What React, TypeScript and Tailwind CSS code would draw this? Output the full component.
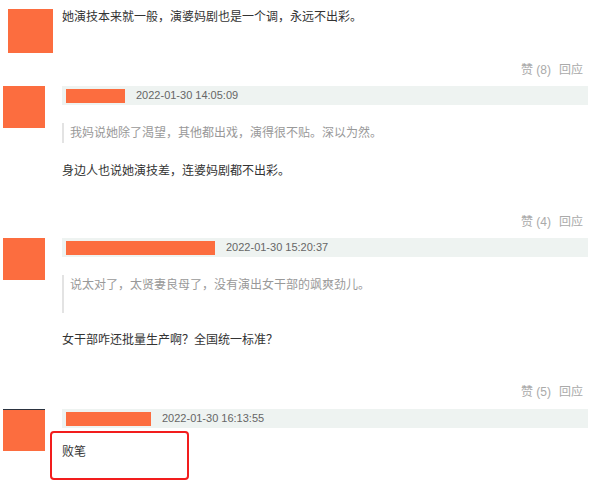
import React from "react";

const font = { fontFamily: '"Liberation Sans", "Noto Sans CJK SC", sans-serif' };

function Actions({ likes, className }: { likes: number; className: string }) {
  return (
    <div className={`flex h-[18px] items-center justify-end gap-2 pr-[5px] text-[12px] leading-[18px] text-[#aaaaaa] ${className}`}>
      <span>赞 ({likes})</span>
      <span>回应</span>
    </div>
  );
}

function Header({ nameWidth, time }: { nameWidth: string; time: string }) {
  return (
    <div className="flex h-[19px] items-center bg-[#eef3f1]">
      <div className={`ml-[4px] h-[14px] bg-[#fc6d3f] ${nameWidth}`} />
      <span className="ml-[11px] text-[11px] leading-[19px] text-[#666666]">{time}</span>
    </div>
  );
}

function Quote({ text, tall }: { text: string; tall?: boolean }) {
  return (
    <div
      className={`border-l-2 border-[#e3e3e3] pl-[6px] text-[12px] leading-[20px] text-[#999999] ${
        tall ? "h-[38px]" : "h-[20px]"
      }`}
    >
      {text}
    </div>
  );
}

export default function App() {
  return (
    <div className="h-[484px] w-[600px] overflow-hidden bg-white text-[#333333]" style={font}>
      {/* top-level comment */}
      <div className="flex pt-[9px]">
        <div className="ml-[8px] h-[44px] w-[45px] shrink-0 bg-[#fc6d3f]" />
        <div className="ml-[9px] mr-[12px] flex-1">
          <p className="mt-[-1px] text-[12px] leading-[18px]">
            她演技本来就一般，演婆妈剧也是一个调，永远不出彩。
          </p>
          <Actions likes={8} className="mt-[35px]" />
        </div>
      </div>

      {/* reply 1 */}
      <div className="mt-[7px] flex">
        <div className="ml-[3px] h-[42px] w-[42px] shrink-0 bg-[#fc6d3f]" />
        <div className="ml-[17px] mr-[12px] flex-1">
          <Header nameWidth="w-[59px]" time="2022-01-30 14:05:09" />
          <div className="mt-[18px]">
            <Quote text="我妈说她除了渴望，其他都出戏，演得很不贴。深以为然。" />
          </div>
          <p className="mt-[19px] text-[12px] leading-[18px]">身边人也说她演技差，连婆妈剧都不出彩。</p>
          <Actions likes={4} className="mt-[33px]" />
        </div>
      </div>

      {/* reply 2 */}
      <div className="mt-[7px] flex">
        <div className="ml-[3px] h-[42px] w-[42px] shrink-0 bg-[#fc6d3f]" />
        <div className="ml-[17px] mr-[12px] flex-1">
          <Header nameWidth="w-[149px]" time="2022-01-30 15:20:37" />
          <div className="mt-[18px]">
            <Quote text="说太对了，太贤妻良母了，没有演出女干部的飒爽劲儿。" tall />
          </div>
          <p className="mt-[18px] text-[12px] leading-[18px]">女干部咋还批量生产啊？全国统一标准？</p>
          <Actions likes={5} className="mt-[34px]" />
        </div>
      </div>

      {/* reply 3 */}
      <div className="mt-[8px] flex">
        <div className="ml-[3px] h-[42px] w-[42px] shrink-0 border-t border-[#2b3340] bg-[#fc6d3f]" />
        <div className="ml-[17px] mr-[12px] flex-1">
          <Header nameWidth="w-[85px]" time="2022-01-30 16:13:55" />
          <div className="ml-[-12px] mt-[3px] h-[49px] w-[139px] rounded-[4px] border-2 border-[#f21d1d] pl-[10px] pt-[10px]">
            <p className="text-[12px] leading-[18px]">败笔</p>
          </div>
        </div>
      </div>
    </div>
  );
}
